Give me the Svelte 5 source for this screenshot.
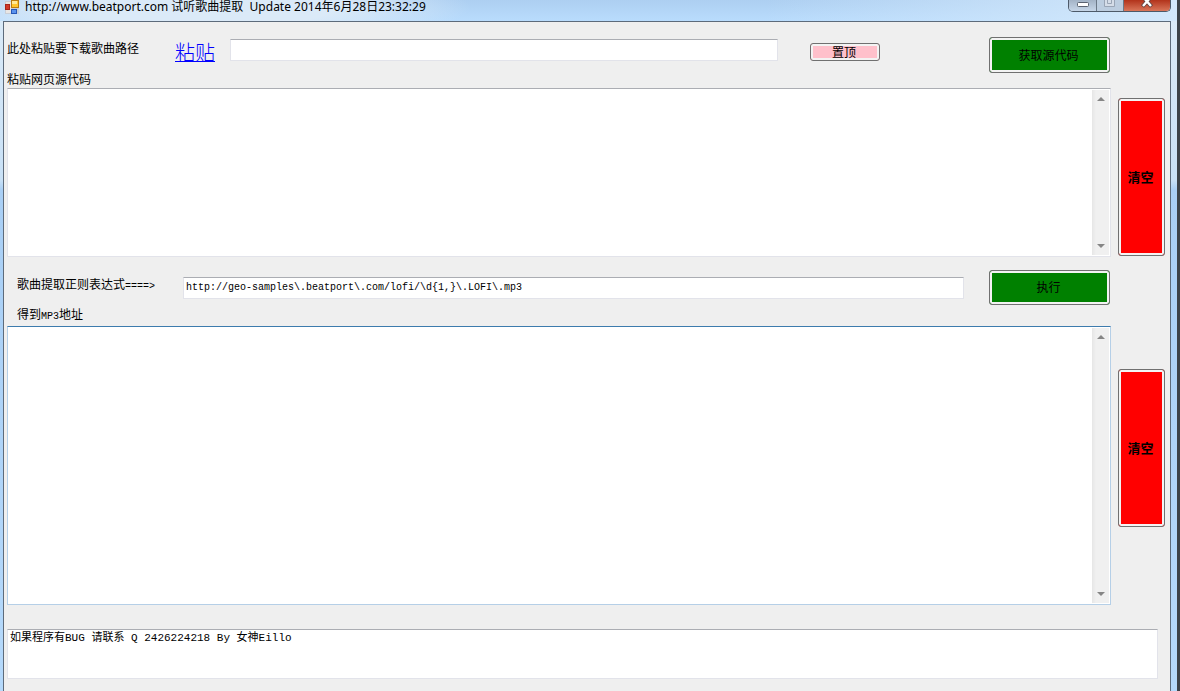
<script>
  let url = $state('');
  let source = $state('');
  let pattern = $state('http://geo-samples\\.beatport\\.com/lofi/\\d{1,}\\.LOFI\\.mp3');
  let result = $state('');
  let note = $state('如果程序有BUG 请联系 Q 2426224218 By 女神Eillo');

  const paste = async (e) => {
    e.preventDefault();
    url = await navigator.clipboard.readText();
  };

  const extract = () => {
    result = (source.match(new RegExp(pattern, 'g')) || []).join('\n');
  };
</script>

{#snippet scrollbar()}
  <div class="scrollbar" aria-hidden="true">
    <svg width="8" height="4" viewBox="0 0 8 4"><path d="M4 0L8 4H0z" fill="#868686" /></svg>
    <svg width="8" height="4" viewBox="0 0 8 4"><path d="M0 0H8L4 4z" fill="#868686" /></svg>
  </div>
{/snippet}

<div class="window">
  <header class="titlebar">
    <svg class="app-icon" width="14" height="14" viewBox="0 0 14 14">
      <rect x="0" y="1" width="14" height="13" fill="#c9ced6" />
      <rect x="1" y="2" width="5" height="11" fill="#e9e6e4" />
      <rect x="0.5" y="4.5" width="4" height="5" fill="#d23a2a" stroke="#a8281e" />
      <rect x="6.5" y="0.500" width="7" height="7" fill="#ffc52e" stroke="#b97b10" />
      <rect x="7" y="1" width="5" height="3" fill="#ffe896" />
      <rect x="6.5" y="9.5" width="5" height="4" fill="#5b93ee" stroke="#2858b8" />
    </svg>
    <h1>http://www.beatport.com 试听歌曲提取&nbsp; Update 2014年6月28日23:32:29</h1>
    <div class="controls">
      <button class="min" aria-label="最小化">
        <svg width="12" height="5" viewBox="0 0 12 5"><rect x="0.5" y="0.5" width="11" height="4" rx="1" fill="#fff" stroke="#5a6270" /></svg>
      </button>
      <button class="max" aria-label="最大化" disabled>
        <svg width="12" height="7" viewBox="0 0 12 7"><path d="M.5-2V6.500H10.500V-2M3.500-1v4.500h4V-1" fill="#d5dde8" stroke="#99a5b5" /></svg>
      </button>
      <button class="close" aria-label="关闭">
        <svg width="12" height="8" viewBox="0 0 12 8">
          <path d="M1.500 6.500L6 1.500L10.500 6.500M3-2L6 1.500L9-2" fill="none" stroke="#5c4444" stroke-width="4" />
          <path d="M2 6L6 1.500L10 6M3-2L6 1.500L9-2" fill="none" stroke="#fff" stroke-width="2.400" />
        </svg>
      </button>
    </div>
  </header>

  <main>
    <div class="row">
      <label class="url-label" for="url">此处粘贴要下载歌曲路径</label>
      <a href="#paste" onclick={paste}>粘贴</a>
      <input id="url" type="text" bind:value={url} />
      <button class="btn pink">置顶</button>
      <button class="btn green">获取源代码</button>
    </div>

    <label class="caption" for="source">粘贴网页源代码</label>
    <div class="box source">
      <textarea id="source" bind:value={source}></textarea>
      {@render scrollbar()}
    </div>
    <button class="btn red clear-source" onclick={() => (source = '')}>清空</button>

    <div class="row regex">
      <label class="regex-label" for="pattern">歌曲提取正则表达式<span>====&gt;</span></label>
      <input id="pattern" type="text" bind:value={pattern} />
      <button class="btn green" onclick={extract}>执行</button>
    </div>

    <label class="caption indent" for="result">得到<span>MP3</span>地址</label>
    <div class="box result">
      <textarea id="result" bind:value={result}></textarea>
      {@render scrollbar()}
    </div>
    <button class="btn red clear-result" onclick={() => (result = '')}>清空</button>

    <textarea class="note" aria-label="联系方式" bind:value={note}></textarea>
  </main>
</div>

<style>
  :global(body) {
    margin: 0;
    background: #b5d9fb;
  }

  .window {
    box-sizing: border-box;
    min-height: 100vh;
    display: flex;
    flex-direction: column;
    padding: 0 6px 0 3px;
    border-right: 3px solid #3d4349;
    background: linear-gradient(#dcebf8, #c9e1f6 180px, #a9cff5 190px, #b5d9fb);
    font: 12px 'Noto Sans CJK SC', sans-serif;
    color: #000;
  }

  .titlebar {
    display: flex;
    align-items: flex-start;
    height: 21px;
    margin: 0 -6px 0 -3px;
    padding: 0 6px 0 5px;
    background:
      radial-gradient(ellipse 270px 40px at 200px 7px, #dbeaf8 50%, transparent),
      linear-gradient(90deg, transparent 65%, #d3e8fb),
      linear-gradient(#adcff1, #b9dcfd);
  }

  .app-icon {
    flex: none;
  }

  h1 {
    flex: 1;
    margin: 0 0 0 6px;
    font: 12px/14px 'Noto Sans', 'Noto Sans CJK SC', sans-serif;
    white-space: nowrap;
  }

  .controls {
    display: flex;
    height: 11px;
    border: 1px solid #4d5a69;
    border-top: 0;
    border-radius: 0 0 5px 5px;
    overflow: hidden;
  }

  .controls button {
    display: flex;
    align-items: flex-start;
    justify-content: center;
    width: 28px;
    padding: 0;
    border: 0;
    border-right: 1px solid #6b7887;
    background: linear-gradient(#a3b3c6, #c6d6e8);
  }

  .controls .min {
    padding-top: 2px;
  }

  .controls .max {
    width: 27px;
    background: #bccddf;
  }

  .controls .close {
    width: 46px;
    border-right: 0;
    background: linear-gradient(#b2331b, #d9765a);
  }

  main {
    flex: 1;
    display: grid;
    grid-template-columns: 1fr 47px;
    align-content: start;
    column-gap: 7px;
    padding: 15px 5px 12px 3px;
    border: 1px solid #5d6b7b;
    border-bottom: 0;
    background: #efefef;
  }

  .row {
    grid-column: 1;
    display: flex;
    align-items: center;
    padding-right: 1px;
  }

  .row input {
    flex: 1;
    min-width: 0;
  }

  label {
    white-space: nowrap;
  }

  label span {
    font: 10px 'Liberation Mono', monospace;
  }

  .url-label {
    width: 168px;
    padding-bottom: 14px;
    line-height: 8px;
  }

  a {
    margin-right: 15px;
    padding-bottom: 6px;
    font-size: 20px;
    font-weight: 300;
    line-height: 24px;
    text-decoration-thickness: 1px;
    color: #00f;
  }

  input,
  textarea {
    box-sizing: border-box;
    margin: 0;
    border: 1px solid #e2e3ea;
    border-top-color: #abadb3;
    border-radius: 0;
    outline: 0;
    background: #fff;
    color: #000;
    font: 10px 'Liberation Mono', 'Noto Sans CJK SC', monospace;
  }

  input {
    height: 22px;
    padding: 0 2px;
  }

  #url {
    margin-bottom: 10px;
  }

  .btn {
    padding: 0 2px 2px 0;
    border: 1px solid #707070;
    border-radius: 3px;
    box-shadow: inset 0 0 0 2px #f3f3f3;
    font: 12px 'Noto Sans CJK SC', sans-serif;
    color: #000;
  }

  .pink {
    width: 70px;
    height: 18px;
    margin: 0 109px 6px 32px;
    padding-bottom: 0;
    background: #ffc0cb;
    line-height: 14px;
  }

  .green {
    width: 121px;
    height: 36px;
    background: #008000;
  }

  .red {
    height: 158px;
    background: #f00;
    font-size: 13px;
    font-weight: bold;
  }

  .clear-source {
    margin-top: 10px;
  }

  .clear-result {
    margin-top: 43px;
  }

  .caption {
    grid-column: 1 / -1;
    height: 15px;
    line-height: 12px;
  }

  .caption.indent {
    height: 21px;
    padding-left: 10px;
    line-height: 18px;
    box-sizing: border-box;
  }

  .box {
    box-sizing: border-box;
    display: flex;
    padding-right: 1px;
    border: 1px solid #e2e3ea;
    border-top-color: #abadb3;
    background: #fff;
  }

  .box textarea {
    flex: 1;
    border: 0;
    resize: none;
  }

  .source {
    height: 169px;
  }

  .result {
    height: 279px;
    border-color: #b5cfe7;
    border-top-color: #3d7bad;
  }

  .scrollbar {
    display: flex;
    flex-direction: column;
    align-items: center;
    justify-content: space-between;
    width: 17px;
    margin: 1px 0;
    padding: 7px 0;
    box-sizing: border-box;
    background: linear-gradient(90deg, #e6e6e6, #f0f0f0 4px);
  }

  .regex {
    margin-top: 13px;
    padding-left: 10px;
  }

  .regex .green {
    height: 35px;
    margin-left: 25px;
  }

  .regex-label {
    width: 166px;
    padding-bottom: 8px;
  }

  .note {
    grid-column: 1 / -1;
    height: 50px;
    margin: 24px 7px 0 0;
    padding: 0 2px;
    font-size: 11px;
    line-height: 17px;
    resize: none;
  }
</style>
